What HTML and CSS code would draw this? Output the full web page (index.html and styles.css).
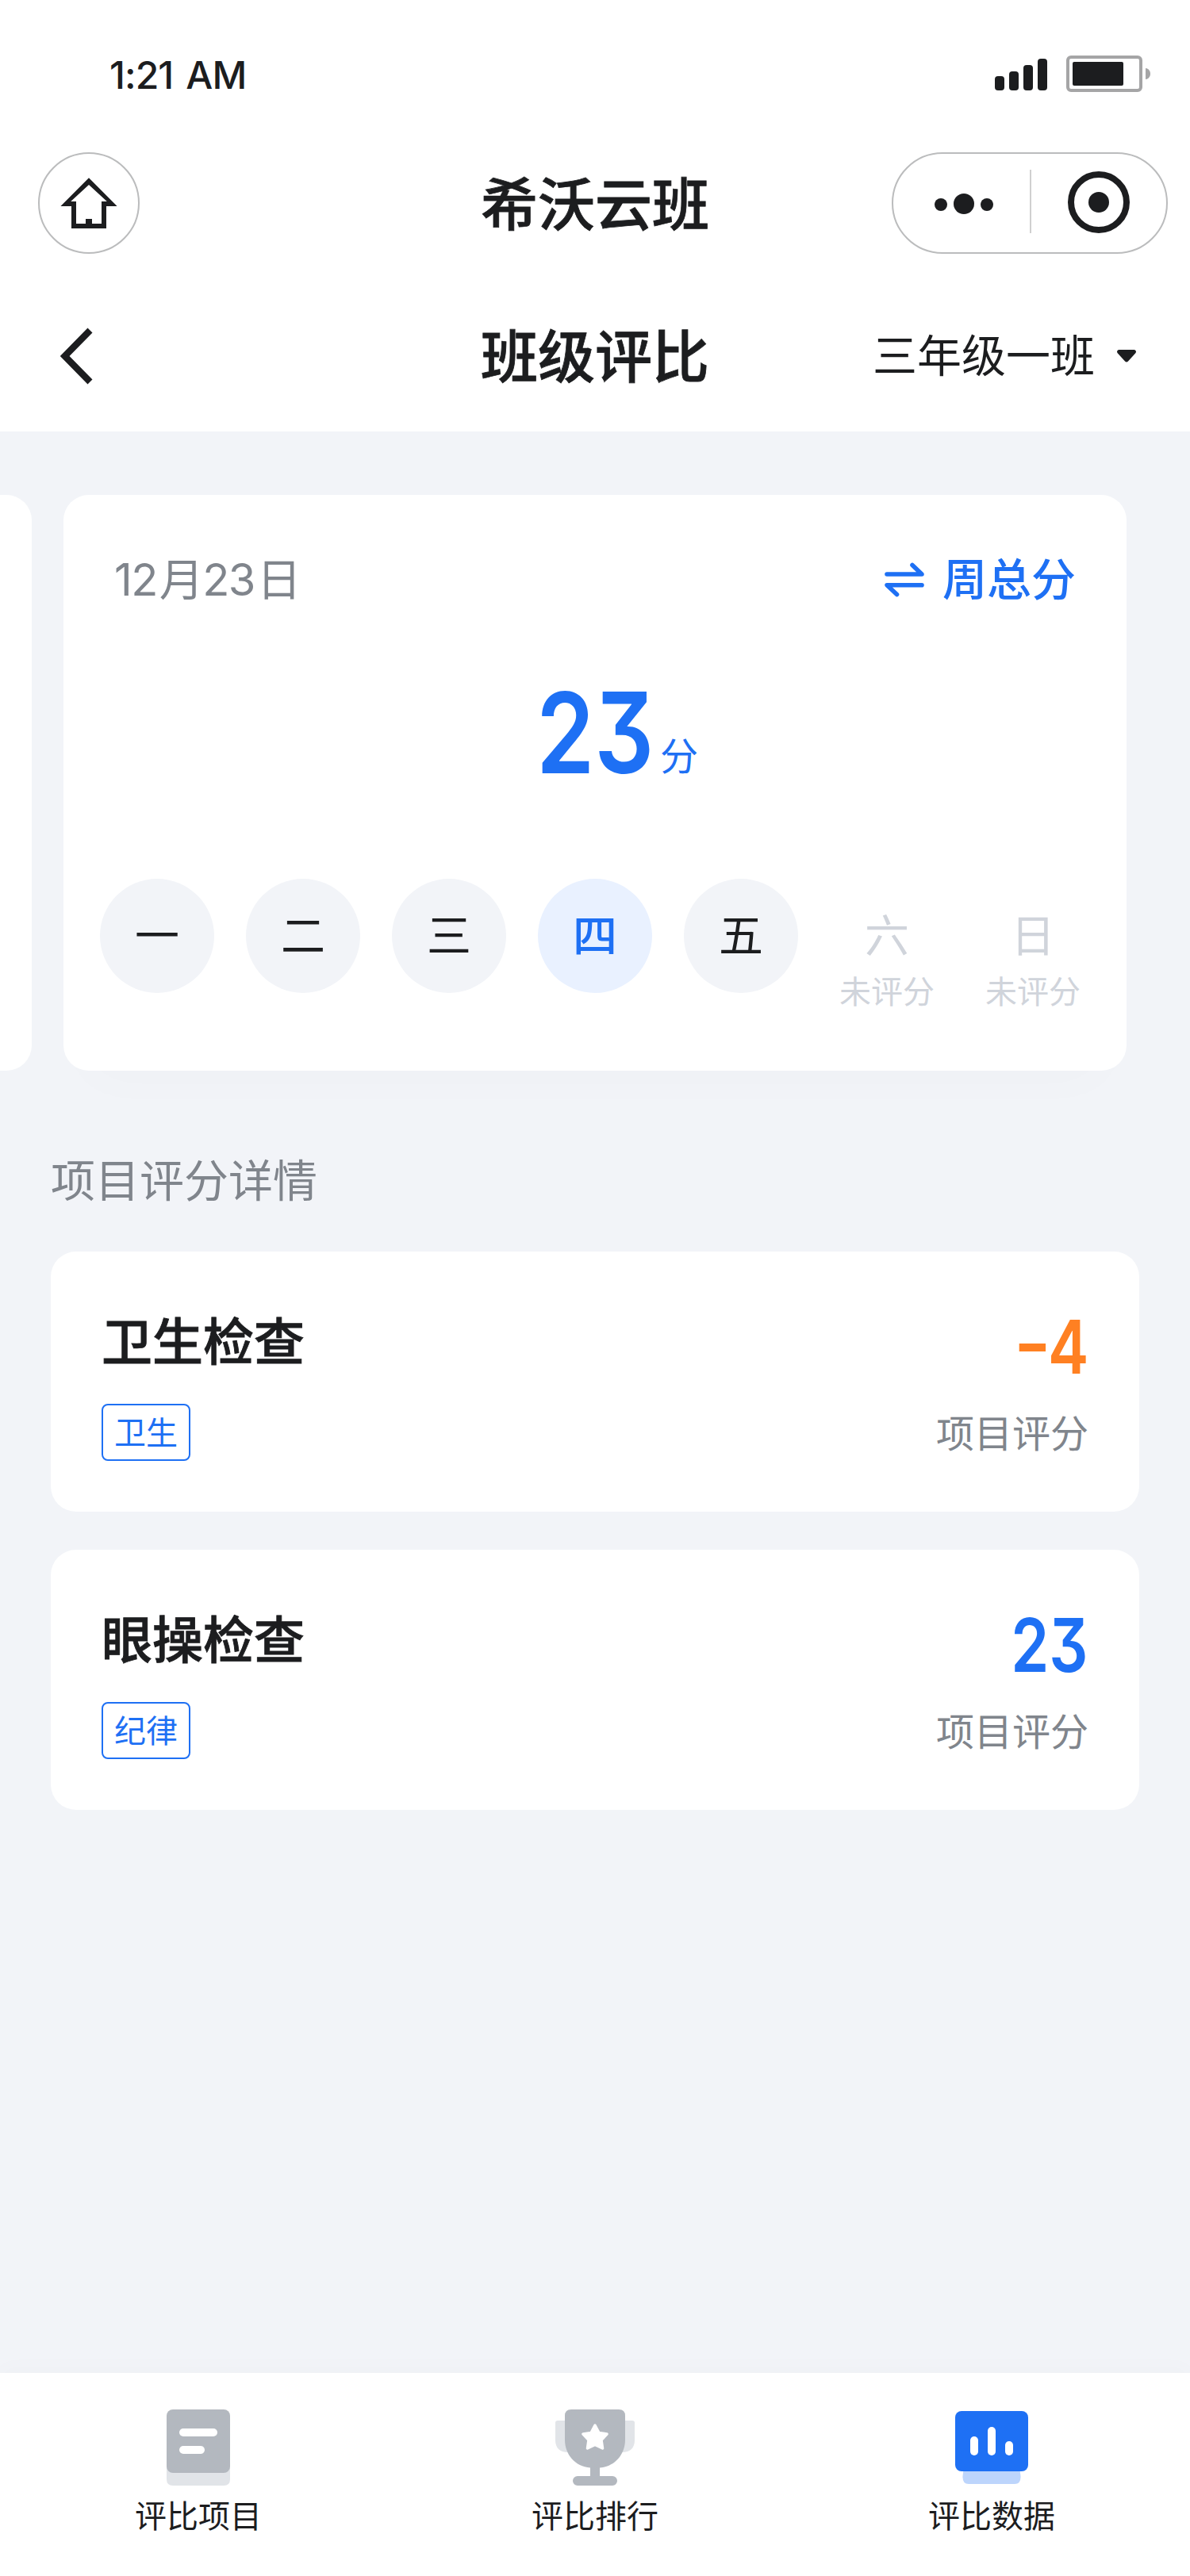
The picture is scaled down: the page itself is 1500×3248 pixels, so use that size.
FILE: index.html
```html
<!DOCTYPE html>
<html lang="zh-CN">
<head>
<meta charset="utf-8">
<title>班级评比</title>
<link rel="stylesheet" href="styles.css">
</head>
<body>
<div class="screen">
  <header class="header">
    <div class="status">
      <span class="time">1:21 AM</span>
      <svg class="status-icons" width="196" height="46" viewBox="0 0 196 46">
        <g fill="#1c1d1f">
          <rect x="0" y="26" width="12" height="18" rx="4"/>
          <rect x="18" y="20" width="12" height="24" rx="4"/>
          <rect x="36" y="12" width="12" height="32" rx="4"/>
          <rect x="54" y="4" width="12" height="40" rx="4"/>
          <rect x="98" y="8" width="64" height="30" rx="2"/>
        </g>
        <rect x="92" y="2" width="92" height="42" rx="4" fill="none" stroke="#a5a5a6" stroke-width="4"/>
        <path d="M190 16c8 1 8 13 0 14z" fill="#a5a5a6"/>
      </svg>
    </div>
    <div class="bar">
      <div class="home">
        <svg width="72" height="64" viewBox="76 224 72 64"><path fill="#1c1d1f" fill-rule="evenodd" d="M112 224.2L147.6 260H134V288H90V260H76.4ZM112 233L134.8 254H128V282H116V276H108V282H96V254H89.2Z"/></svg>
      </div>
      <h1 class="title">希沃云班</h1>
      <div class="capsule">
        <svg width="344" height="124" viewBox="1126 194 344 124">
          <g fill="#1c1d1f"><circle cx="1186" cy="258" r="8"/><circle cx="1215" cy="257" r="13"/><circle cx="1244" cy="258" r="8"/><circle cx="1385" cy="255" r="13"/></g>
          <rect x="1298" y="214" width="2" height="80" fill="#d0d0d0"/>
          <circle cx="1385" cy="255" r="35" fill="none" stroke="#1c1d1f" stroke-width="8"/>
        </svg>
      </div>
    </div>
    <div class="bar bar-page">
      <svg class="back" width="42" height="72" viewBox="76 413 42 72"><path d="M113.5 416.5L81.6 449L113.5 481.5" fill="none" stroke="#1c1d1f" stroke-width="8.400"/></svg>
      <h2 class="title">班级评比</h2>
      <div class="picker">三年级一班<svg width="24" height="16" viewBox="0 0 24 16"><path d="M2 0H22Q25 1 23.500 4L14 14.500Q12 16.500 10 14.500L.5 4Q-1 1 2 0Z" fill="#1c1d1f"/></svg></div>
    </div>
  </header>

  <main class="content">
    <section class="carousel">
      <div class="slide-prev"></div>
      <div class="week">
        <div class="week-head">
          <span class="date">12<i class="han">月</i>23<i class="han">日</i></span>
          <span class="switch"><svg width="52" height="44" viewBox="1114 708 52 44"><path d="M1118 723H1162L1150 711.500M1162 736.800H1118L1130.500 748.500" fill="none" stroke="#1e70f4" stroke-width="5.600" stroke-linecap="round" stroke-linejoin="round"/></svg>周总分</span>
        </div>
        <div class="total"><span class="num num-lg">23</span><span class="unit">分</span></div>
        <div class="days">
          <div class="day">一</div>
          <div class="day">二</div>
          <div class="day">三</div>
          <div class="day day-on">四</div>
          <div class="day">五</div>
          <div class="day day-off">六<small>未评分</small></div>
          <div class="day day-off">日<small>未评分</small></div>
        </div>
      </div>
    </section>

    <h3 class="section">项目评分详情</h3>
    <div class="list">
      <article class="item">
        <div class="item-main"><h4>卫生检查</h4><span class="tag">卫生</span></div>
        <div class="item-score"><span class="num minus"><i class="dash">-</i>4</span><span class="label">项目评分</span></div>
      </article>
      <article class="item">
        <div class="item-main"><h4>眼操检查</h4><span class="tag">纪律</span></div>
        <div class="item-score"><span class="num">23</span><span class="label">项目评分</span></div>
      </article>
    </div>
  </main>

  <nav class="tabs">
    <div class="tab">
      <svg width="104" height="104" viewBox="198 3034 104 104">
        <path d="M210 3100H290V3126Q290 3134 282 3134H218Q210 3134 210 3126Z" fill="#e1e4e8"/>
        <rect x="210" y="3038" width="80" height="80" rx="8" fill="#b3b8bf"/>
        <rect x="226" y="3062" width="48" height="10" rx="5" fill="#fff"/><rect x="226" y="3084" width="32" height="10" rx="5" fill="#fff"/>
      </svg>
      <span>评比项目</span>
    </div>
    <div class="tab">
      <svg width="104" height="104" viewBox="698 3034 104 104">
        <path d="M703 3052H797Q800 3052 800 3055V3076Q800 3092 784 3092H716Q700 3092 700 3076V3055Q700 3052 703 3052Z" fill="#e1e4e8"/>
        <path d="M720 3038H780Q788 3038 788 3046V3076C788 3095 775 3110 756 3111.500V3122H772A6 6 0 0 1 772 3134H728A6 6 0 0 1 728 3122H744V3111.500C725 3110 712 3095 712 3076V3046Q712 3038 720 3038Z" fill="#b3b8bf"/>
        <path d="M750 3058L755 3067.500L765 3069L758 3076.500L759.500 3087L750 3082.500L740.500 3087L742 3076.500L735 3069L745 3067.500Z" fill="#fff" stroke="#fff" stroke-width="3.500" stroke-linejoin="round"/>
      </svg>
      <span>评比排行</span>
    </div>
    <div class="tab">
      <svg width="104" height="104" viewBox="1198 3034 104 104">
        <path d="M1215 3110H1285L1286.500 3122Q1287 3132 1279 3132H1221Q1213 3132 1213.500 3122Z" fill="#bdd5fc"/>
        <rect x="1204" y="3040" width="92" height="76" rx="8" fill="#1e70f4"/>
        <g fill="#fff"><rect x="1223" y="3072" width="10" height="24" rx="5"/><rect x="1245" y="3060" width="10" height="36" rx="5"/><rect x="1267" y="3078" width="10" height="18" rx="5"/></g>
      </svg>
      <span>评比数据</span>
    </div>
  </nav>
</div>
</body>
</html>
```
FILE: styles.css
```css
* { box-sizing: border-box; margin: 0; padding: 0; }
body {
  width: 1500px;
  font-family: Inter, "Noto Sans CJK SC", sans-serif;
  color: #1c1d1f;
  background: #f2f4f8;
}
svg { display: block; flex: none; }
.screen { display: flex; flex-direction: column; height: 3248px; overflow: hidden; }

.header { height: 544px; background: #fff; }
.status { display: flex; justify-content: space-between; height: 160px; padding: 70px 50px 0 138px; }
.time { font-size: 48px; font-weight: 500; line-height: 50px; letter-spacing: -.9px; word-spacing: 4px; }
.bar {
  display: grid;
  grid-template-columns: 400px 604px 1fr;
  align-items: center;
  height: 192px;
  padding: 0 28px 0 48px;
}
.bar-page { grid-template-columns: 400px 548px 1fr; padding: 2px 68px 0 76px; }
.title { padding-top: 3px; font-size: 72px; font-weight: 500; line-height: 96px; text-align: center; -webkit-text-stroke: .8px; }
.bar-page .title { padding-top: 2px; }
.home {
  display: flex; align-items: center; justify-content: center;
  width: 128px; height: 128px;
  border: 2px solid #bbbcbd; border-radius: 50%;
}
.capsule { justify-self: end; width: 348px; height: 128px; border: 2px solid #bbbcbd; border-radius: 64px; }
.picker { display: flex; align-items: center; justify-content: flex-end; gap: 28px; font-size: 56px; line-height: 80px; white-space: nowrap; }

.content { flex: 1; padding-top: 80px; }
.carousel { display: flex; gap: 40px; }
.slide-prev { width: 40px; height: 726px; background: #fff; border-radius: 0 32px 32px 0; }
.week {
  width: 1340px; height: 726px;
  padding: 67px 46px 0;
  background: #fff; border-radius: 32px;
  box-shadow: 0 40px 64px -32px rgba(0, 0, 0, .018);
}
.week-head { display: flex; justify-content: space-between; padding: 0 18px; font-size: 56px; line-height: 80px; }
.date { letter-spacing: -1.6px; color: #80858c; }
.han { margin-left: 3px; font-style: normal; }
.switch { display: flex; align-items: center; gap: 22px; font-weight: 500; color: #1e70f4; }
.total { display: flex; align-items: baseline; height: 337px; padding: 69px 0 0 550px; color: #1e70f4; }
.num {
  display: block;
  font-family: Inter, sans-serif;
  font-size: 94px; font-weight: 600; line-height: 112px;
  font-feature-settings: "cv09" 1;
  color: #1e70f4;
  transform: scaleX(.82); transform-origin: right;
}
.num-lg { width: 156px; font-size: 141px; line-height: 168px; transform: scaleX(.835); transform-origin: left; }
.unit { font-size: 48px; line-height: 64px; transform: translateY(-4px); }
.days { display: flex; gap: 40px; }
.day {
  display: flex; flex-direction: column; align-items: center;
  width: 144px; height: 144px;
  border-radius: 50%; background: #f2f4f8;
  font-size: 56px; line-height: 145px; white-space: nowrap;
}
.day-on { background: #e9f1ff; color: #1e70f4; font-weight: 500; }
.day-off { background: none; color: #d0d4db; }
.day-off small { margin-top: -30px; font-size: 40px; line-height: 56px; }

.section { margin: 99px 64px 0; font-size: 56px; font-weight: 400; line-height: 80px; color: #80858c; }
.list { display: grid; gap: 48px; padding: 49px 64px 0; }
.item { display: flex; justify-content: space-between; height: 328px; padding: 64px; background: #fff; border-radius: 32px; }
.item-main { display: flex; flex-direction: column; align-items: flex-start; }
.item h4 { height: 128px; padding-top: 2px; font-size: 64px; font-weight: 500; line-height: 96px; -webkit-text-stroke: .9px; }
.tag { width: 112px; height: 72px; border: 2px solid #1e70f4; border-radius: 8px; font-size: 40px; line-height: 69px; text-align: center; color: #1e70f4; }
.item-score { display: flex; flex-direction: column; align-items: flex-end; }
.minus { color: #ff8022; }
.dash { display: inline-block; font-style: normal; transform: translate(-2px, -5px) scaleX(1.32); }
.label { margin-top: 22px; font-size: 48px; line-height: 64px; color: #80858c; }

.tabs { display: grid; grid-template-columns: repeat(3, 1fr); height: 256px; padding-top: 42px; background: #fff; box-shadow: 0 -8px 24px rgba(0, 0, 0, .015); }
.tab { display: flex; flex-direction: column; align-items: center; font-size: 40px; line-height: 64px; }
.tab span { margin-top: 3px; }
```
